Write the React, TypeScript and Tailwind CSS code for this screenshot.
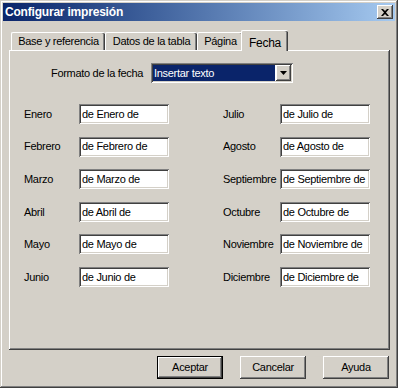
import React from "react";

const raised =
  "bg-[#D4D0C8] shadow-[inset_-1px_-1px_#404040,inset_1px_1px_#ffffff,inset_-2px_-2px_#808080]";
const sunken =
  "bg-white shadow-[inset_1px_1px_#808080,inset_-1px_-1px_#ffffff,inset_2px_2px_#404040,inset_-2px_-2px_#D4D0C8]";

const left = [
  ["Enero", "de Enero de"],
  ["Febrero", "de Febrero de"],
  ["Marzo", "de Marzo de"],
  ["Abril", "de Abril de"],
  ["Mayo", "de Mayo de"],
  ["Junio", "de Junio de"],
];
const right = [
  ["Julio", "de Julio de"],
  ["Agosto", "de Agosto de"],
  ["Septiembre", "de Septiembre de"],
  ["Octubre", "de Octubre de"],
  ["Noviembre", "de Noviembre de"],
  ["Diciembre", "de Diciembre de"],
];

function MonthCol({ rows, labelW }: { rows: string[][]; labelW: string }) {
  return (
    <div className="flex flex-col gap-[12.6px]">
      {rows.map(([m, v]) => (
        <div key={m} className="flex h-[20px] items-center">
          <span className={`${labelW} whitespace-nowrap`}>{m}</span>
          <div className={`${sunken} flex h-[20px] w-[90px] shrink-0 items-center overflow-hidden whitespace-nowrap pl-[3px]`}>
            {v}
          </div>
        </div>
      ))}
    </div>
  );
}

function Tab({ label, w }: { label: string; w: string }) {
  return (
    <div
      className={`${w} flex h-[18px] items-center justify-center rounded-t-[2px] border-l border-t border-white bg-[#D4D0C8] shadow-[inset_-1px_0_#404040,inset_-2px_0_#808080]`}
    >
      {label}
    </div>
  );
}

export default function App() {
  return (
    <div className="h-[388px] w-[398px] bg-[#D4D0C8] p-[3px] pb-0 font-['Liberation_Sans',Arial,sans-serif] text-[11px] tracking-[-0.3px] text-black shadow-[inset_-1px_-1px_#404040,inset_1px_1px_#D4D0C8,inset_-2px_-2px_#808080,inset_2px_2px_#ffffff]">
      {/* title bar */}
      <div className="flex h-[18px] items-center justify-between bg-gradient-to-r from-[#0A246A] to-[#A6CAF0] pl-[2px] pr-[2px]">
        <span className="text-[12px] font-bold tracking-[-0.2px] text-white">Configurar impresión</span>
        <div className={`${raised} flex h-[14px] w-[16px] items-center justify-center`}>
          <svg width="8" height="7" viewBox="0 0 8 7">
            <path d="M0 0h2l2 2 2-2h2L5 3.5 8 7H6L4 5 2 7H0l3-3.5z" fill="#000" />
          </svg>
        </div>
      </div>

      <div className="pl-[6px] pr-[5px]">
        {/* tabs */}
        <div className="mt-[8px] flex h-[21px] items-end pl-[2px]">
          <Tab label="Base y referencia" w="w-[94px]" />
          <Tab label="Datos de la tabla" w="w-[92px]" />
          <Tab label="Página" w="w-[46px]" />
          <div className="relative z-10 -mb-[1px] -ml-[2px] flex h-[21px] w-[47px] items-start justify-center rounded-t-[2px] border-l border-t border-white bg-[#D4D0C8] pt-[3px] text-[12px] shadow-[inset_-1px_0_#404040,inset_-2px_0_#808080]">
            Fecha
          </div>
        </div>

        {/* panel */}
        <div className="h-[300px] w-[381px] bg-[#D4D0C8] shadow-[inset_-1px_-1px_#404040,inset_1px_1px_#ffffff,inset_-2px_-2px_#808080]">
          <div className="flex items-center pl-[42px] pt-[13px]">
            <span className="w-[100px] whitespace-nowrap">Formato de la fecha</span>
            <div className={`${sunken} flex h-[20px] w-[142px] items-center p-[2px]`}>
              <div className="flex h-full flex-1 items-center bg-[#0A246A] pl-[1px] text-white">Insertar texto</div>
              <div className={`${raised} ml-[1px] flex h-full w-[15px] items-center justify-center`}>
                <svg width="7" height="4" viewBox="0 0 7 4">
                  <path d="M0 0h7L3.5 4z" fill="#000" />
                </svg>
              </div>
            </div>
          </div>

          <div className="mt-[21px] flex pl-[15px]">
            <MonthCol rows={left} labelW="w-[55px]" />
            <div className="ml-[54px]">
              <MonthCol rows={right} labelW="w-[57px]" />
            </div>
          </div>
        </div>

        {/* buttons */}
        <div className="mt-[6px] flex justify-end gap-[17px] pr-[1px]">
          <div className="h-[23px] w-[66px] border border-black">
            <div className={`${raised} flex h-full items-center justify-center`}>Aceptar</div>
          </div>
          <div className={`${raised} flex h-[23px] w-[66px] items-center justify-center`}>Cancelar</div>
          <div className={`${raised} flex h-[23px] w-[66px] items-center justify-center`}>Ayuda</div>
        </div>
      </div>
    </div>
  );
}
